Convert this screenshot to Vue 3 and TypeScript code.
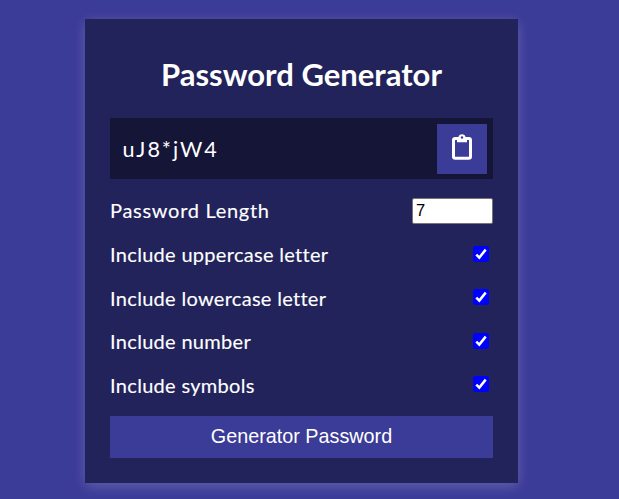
<script setup lang="ts">
import { reactive, ref } from 'vue'

interface Setting {
  id: string
  label: string
  checked: boolean
}

const password = ref('uJ8*jW4')
const length = ref(7)
const settings = reactive<Setting[]>([
  { id: 'uppercase', label: 'Include uppercase letter', checked: true },
  { id: 'lowercase', label: 'Include lowercase letter', checked: true },
  { id: 'number', label: 'Include number', checked: true },
  { id: 'symbols', label: 'Include symbols', checked: true },
])

const pools: Record<string, string> = {
  uppercase: 'ABCDEFGHIJKLMNOPQRSTUVWXYZ',
  lowercase: 'abcdefghijklmnopqrstuvwxyz',
  number: '0123456789',
  symbols: '!@#$%^&*(){}[]=<>/,.',
}

function generate() {
  const chars = settings.filter((s) => s.checked).map((s) => pools[s.id]).join('')
  password.value = chars
    ? Array.from({ length: length.value }, () => chars[Math.floor(Math.random() * chars.length)]).join('')
    : ''
}

function copy() {
  navigator.clipboard?.writeText(password.value)
}
</script>

<template>
  <main class="page">
    <section class="card">
      <h2 class="title">Password Generator</h2>
      <div class="result">
        <span class="password">{{ password }}</span>
        <button class="copy" aria-label="Copy" @click="copy">
          <svg width="22" height="28" viewBox="0 0 22 28">
            <rect x="2.5" y="5.6" width="17" height="19.6" rx="1.8" fill="none" stroke="#fff" stroke-width="3" />
            <path d="M6 4.2h1.4a3.7 3.7 0 0 1 7.2 0H16v5H6z" fill="#fff" />
            <circle cx="11" cy="4.5" r="1.2" fill="#3b3b98" />
          </svg>
        </button>
      </div>
      <div class="row first">
        <label class="label wide" for="length">Password Length</label>
        <input id="length" v-model.number="length" class="length" type="text" />
      </div>
      <div v-for="s in settings" :key="s.id" class="row">
        <label class="label" :for="s.id">{{ s.label }}</label>
        <span class="check">
          <input :id="s.id" v-model="s.checked" type="checkbox" />
          <svg v-if="s.checked" width="16" height="16" viewBox="0 0 16 16">
            <path d="M3.3 8.6l3 3L12.7 3.6" fill="none" stroke="#fff" stroke-width="2.5" />
          </svg>
        </span>
      </div>
      <button class="generate" @click="generate">Generator Password</button>
    </section>
  </main>
</template>

<style>
body {
  margin: 0;
  background: #3b3b98;
}
</style>

<style scoped>
.page {
  box-sizing: border-box;
  height: 499px;
  padding: 18.7px 0 0 85.3px;
  overflow: hidden;
  background: #3b3b98;
  color: #fff;
  font-family: Lato, "Noto Sans", sans-serif;
  font-variant-ligatures: none;
}
.card {
  box-sizing: border-box;
  width: 432.4px;
  height: 464px;
  padding: 35.3px 24.8px 0;
  background: #23235b;
  box-shadow: 0 2.5px 12.4px rgba(255, 255, 255, 0.2);
}
.title {
  margin: 0;
  height: 40px;
  font-size: 31px;
  line-height: 40px;
  font-weight: 700;
  text-align: center;
  white-space: nowrap;
}
.result {
  display: flex;
  align-items: center;
  justify-content: space-between;
  box-sizing: border-box;
  height: 61.4px;
  margin: 24px 0 18px;
  padding: 0 6px 0 12.4px;
  background: #151537;
}
.password {
  font-size: 21.6px;
  letter-spacing: 1.9px;
}
.copy {
  display: flex;
  align-items: center;
  justify-content: center;
  width: 50px;
  height: 50px;
  padding: 0 0 3px;
  border: 0;
  background: #3b3b98;
}
.row {
  display: flex;
  align-items: center;
  justify-content: space-between;
  height: 43.4px;
}
.row.first {
  height: 27px;
  margin-bottom: 9.2px;
}
.label {
  padding-bottom: 1.8px;
  font-size: 20px;
  letter-spacing: 0.3px;
  white-space: nowrap;
  -webkit-text-stroke: 0.12px #fff;
}
.label.wide {
  letter-spacing: 0.7px;
}
.length {
  box-sizing: border-box;
  width: 81px;
  height: 26px;
  padding: 1px 3px;
  border: 1.5px solid #767676;
  border-radius: 2px;
  background: #fff;
  color: #000;
  font: 16.5px "Liberation Sans", Arial, sans-serif;
}
.check {
  position: relative;
  width: 16px;
  height: 16px;
  margin: 0 3.5px 2.6px 0;
}
.check input {
  display: block;
  appearance: none;
  width: 16px;
  height: 16px;
  margin: 0;
  border-radius: 2.5px;
  background: #0000ff;
}
.check svg {
  position: absolute;
  inset: 0;
  pointer-events: none;
}
.generate {
  display: block;
  width: 100%;
  height: 42px;
  margin-top: 8.4px;
  padding: 0 0 1px;
  border: 0;
  background: #3b3b98;
  color: #fff;
  font: 19.8px "Liberation Sans", Arial, sans-serif;
}
</style>
